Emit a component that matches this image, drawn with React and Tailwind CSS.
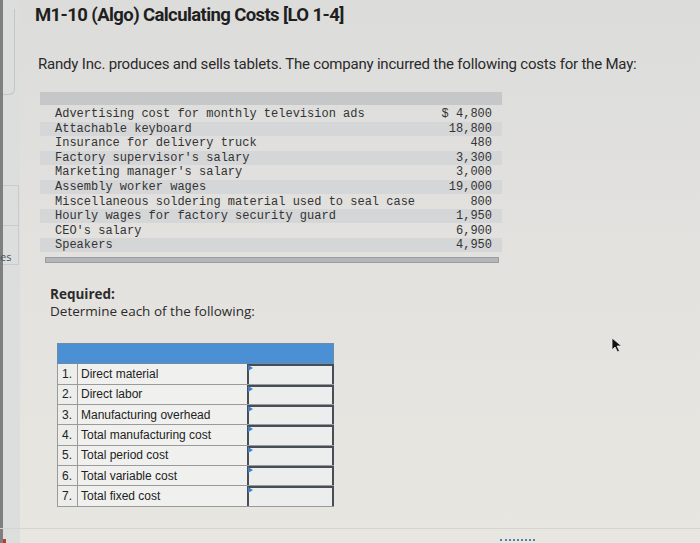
const costs = [
    ['Advertising cost for monthly television ads', '$ 4,800'],
    ['Attachable keyboard', '18,800'],
    ['Insurance for delivery truck', '480'],
    ["Factory supervisor's salary", '3,300'],
    ["Marketing manager's salary", '3,000'],
    ['Assembly worker wages', '19,000'],
    ['Miscellaneous soldering material used to seal case', '800'],
    ['Hourly wages for factory security guard', '1,950'],
    ["CEO's salary", '6,900'],
    ['Speakers', '4,950'],
]

const required = [
    'Direct material',
    'Direct labor',
    'Manufacturing overhead',
    'Total manufacturing cost',
    'Total period cost',
    'Total variable cost',
    'Total fixed cost',
]

function Cursor() {
    return (
        <svg width="12" height="16" viewBox="0 0 12 16" className="absolute left-[611px] top-[337px]">
            <path d="M1 1 L1 13 L4 10 L6.5 15 L8.5 14 L6 9 L10.5 9 Z" fill="#111" stroke="#eee" strokeWidth="0.8" />
        </svg>
    )
}

export default function App() {
    return (
        <div className="relative flex w-[700px] h-[543px] overflow-hidden bg-linear-to-b from-[#dcdcdb] via-[#e3e2df] to-[#e8e6e0] text-[#222]">
            {/* left sidebar sliver */}
            <div className="flex flex-col w-[20px] h-full border-l-[3px] border-[#7f7f7f] bg-[#dcdddd]">
                <div className="h-[86px] mt-[9px] mr-[5px] border-r border-b border-[#c4c4c4] rounded-br-md" />
                <div className="h-[40px] mt-[90px] mr-[1px] border-r border-t border-[#cbcbcb]" />
                <div className="h-[40px] flex items-end pb-[2px] mr-[1px] border-r border-t border-b border-[#cbcbcb]">
                    <span className="text-[11px] leading-none text-[#4b5563] -ml-[3px] font-['Open_Sans',sans-serif]">es</span>
                </div>
                <div className="mt-auto h-[4px] w-[3px] bg-[#c0392b]" />
            </div>

            <div className="flex flex-col flex-1 pl-[15px]">
                <h1 className="mt-[3px] text-[18.5px] leading-[24px] font-bold tracking-[-0.6px] text-[#1f1f1f] font-['Roboto',sans-serif]">
                    M1-10 (Algo) Calculating Costs [LO 1-4]
                </h1>
                <p className="mt-[27px] ml-[3px] text-[15px] leading-[20px] tracking-[-0.2px] text-[#2a2a2a] font-['Roboto',sans-serif]">
                    Randy Inc. produces and sells tablets. The company incurred the following costs for the May:
                </p>

                {/* cost data table */}
                <div className="mt-[18px] ml-[5px] w-[462px] flex flex-col">
                    <div className="h-[13px] bg-[#c6c7c9]" />
                    <div className="mt-[2px] flex flex-col font-['Liberation_Mono',monospace] text-[12px] text-[#333]">
                        {costs.map(([label, amount], i) => (
                            <div
                                key={label}
                                className={`flex items-center justify-between h-[14.55px] pl-[15px] pr-[10px] ${i % 2 === 1 ? 'bg-[#d5d6d7]' : ''}`}
                            >
                                <span className="leading-none">{label}</span>
                                <span className="leading-none">{amount}</span>
                            </div>
                        ))}
                    </div>
                    <div className="mt-[5px] ml-[5px] w-[454px] h-[6px] bg-[#b4b6b9] border border-[#9a9ca0]" />
                </div>

                {/* required section */}
                <div className="mt-[23px] ml-[15px] flex flex-col gap-[1px] font-['Open_Sans',sans-serif] text-[13.5px] leading-[16px] text-[#2b2b2b]">
                    <div className="font-bold">Required:</div>
                    <div>Determine each of the following:</div>
                </div>

                <div className="mt-[24px] ml-[22px] w-[277px] flex flex-col font-['Liberation_Sans',sans-serif] text-[12px] text-[#222]">
                    <div className="h-[21px] bg-[#4b8fd5] border border-[#6f8aa5]" />
                    {required.map((label, i) => (
                        <div key={label} className="flex h-[20.3px] border-b border-[#9a9a9a]">
                            <div className="w-[21px] flex items-center pl-[4px] border-l border-r border-[#9a9a9a] bg-[#ededeb]">
                                {i + 1}.
                            </div>
                            <div className="w-[169px] flex items-center pl-[3px] bg-[#f0f0ee]">
                                {label}
                            </div>
                            <div className="relative flex-1 border-l-2 border-t-2 border-r-2 border-[#454e59] bg-[#eceeee]">
                                <span className="absolute -left-[1px] -top-[1px] w-0 h-0 border-y-[3px] border-y-transparent border-l-[5px] border-l-[#3f7fc6]" />
                            </div>
                        </div>
                    ))}
                </div>

                <div className="mt-auto mb-[14px] -ml-[35px] h-[1px] bg-[#d6d4cd]" />
            </div>

            <div className="absolute left-[500px] bottom-[1px] w-[35px] h-[3px] border-t-2 border-dotted border-[#5a7fae]" />
            <Cursor />
        </div>
    )
}
